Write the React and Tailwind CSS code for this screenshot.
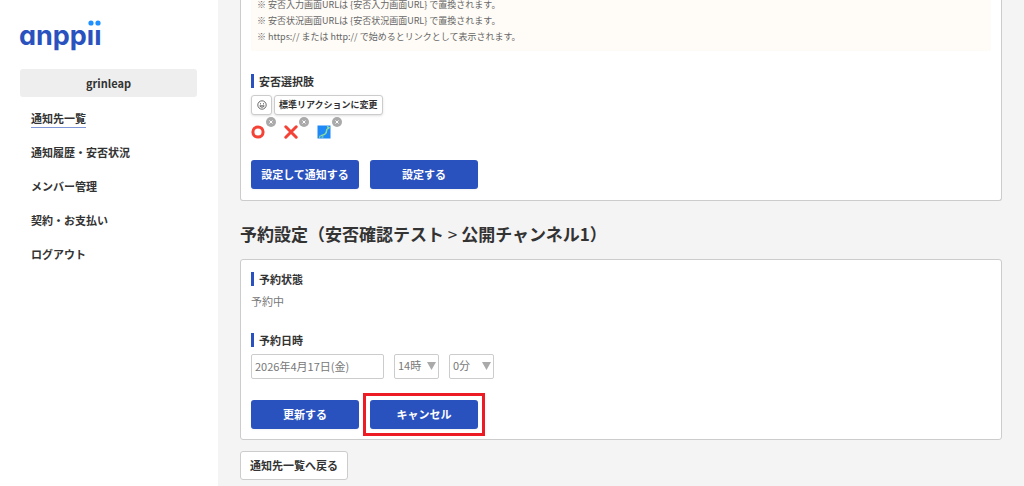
import React from "react";

const navItems = [
  { label: "通知先一覧", active: true },
  { label: "通知履歴・安否状況" },
  { label: "メンバー管理" },
  { label: "契約・お支払い" },
  { label: "ログアウト" },
];

const notes = [
  "※ 安否入力画面URLは {安否入力画面URL} で置換されます。",
  "※ 安否状況画面URLは {安否状況画面URL} で置換されます。",
  "※ https:// または http:// で始めるとリンクとして表示されます。",
];

function Logo() {
  return (
    <svg viewBox="0 0 80 36" className="block h-9 w-20 overflow-visible" role="img" aria-label="anppii">
      <clipPath id="logo-body">
        <rect x="-4" y="11" width="90" height="30" />
      </clipPath>
      <text
        x="-1"
        y="27"
        fill="#2a52be"
        clipPath="url(#logo-body)"
        className="font-['Inter',sans-serif] text-[27px] font-bold [font-feature-settings:'cv11']"
      >
        anppii
      </text>
      <circle cx="71" cy="5" r="2.6" fill="#1e90ff" />
      <circle cx="78" cy="5" r="2.6" fill="#1e90ff" />
    </svg>
  );
}

function SmileIcon() {
  return (
    <svg viewBox="0 0 10 10" className="size-[10px]" fill="none" stroke="#444" strokeWidth="0.8" aria-hidden="true">
      <circle cx="5" cy="5" r="4.2" />
      <path d="M2.8 5.8a2.3 2 0 0 0 4.4 0z" />
      <path d="M3.5 3.2v1.2M6.5 3.2v1.2" />
    </svg>
  );
}

function CircleMark() {
  return (
    <svg viewBox="0 0 14 14" className="size-[14px]" fill="none" aria-hidden="true">
      <circle cx="7" cy="7" r="5.1" stroke="#f44336" strokeWidth="3" />
    </svg>
  );
}

function CrossMark() {
  return (
    <svg viewBox="0 0 14 14" className="size-[14px]" fill="none" aria-hidden="true">
      <path d="M1.8 1.8l10.4 10.4M12.2 1.8L1.8 12.2" stroke="#f44336" strokeWidth="3" strokeLinecap="round" />
    </svg>
  );
}

function MapMark() {
  return (
    <svg viewBox="0 0 14 14" className="size-[14px]" fill="none" stroke="#8fdc96" strokeLinecap="round" aria-hidden="true">
      <rect x="0.5" y="0.5" width="13" height="13" fill="#1e88f7" stroke="none" />
      <path d="M10.6 1.8l1.4 1-1.4 1" strokeWidth="1.5" />
      <path d="M9.8 4.6l-.6 3-1.6 1.8-3.4 1.2" strokeWidth="1.5" />
      <path d="M3 11l-.3 1.4M5 12.2l1-.3" strokeWidth="1.2" />
    </svg>
  );
}

function Reaction({ label, children }) {
  return (
    <li className="relative w-[33px] pt-1">
      {children}
      <button
        type="button"
        aria-label={`${label}を削除`}
        className="absolute -top-1 left-[15px] flex size-[10px] items-center justify-center rounded-full bg-[#aaa]"
      >
        <svg viewBox="0 0 10 10" className="size-[10px]" stroke="#fff" strokeWidth="1" aria-hidden="true">
          <path d="M3.5 3.5l3 3M6.5 3.5l-3 3" />
        </svg>
      </button>
    </li>
  );
}

function SectionTitle({ children, ...rest }) {
  return (
    <h3 className="flex items-center gap-[5px] text-[11px] leading-[14px] font-bold text-[#333]" {...rest}>
      <span className="h-[14px] w-[3px] bg-[#2a52be]" />
      {children}
    </h3>
  );
}

function PrimaryButton({ children }) {
  return (
    <button
      type="button"
      className="block h-[29px] w-[108px] rounded-[3px] bg-[#2a52be] text-[11px] font-bold text-white shadow-xs"
    >
      {children}
    </button>
  );
}

function TimeSelect({ label, value }) {
  return (
    <div className="relative">
      <select
        aria-label={label}
        defaultValue={value}
        className="block h-[25px] w-[45px] appearance-none rounded-[2px] border border-[#ccc] bg-white pb-[2px] pl-[3px] text-[11px] text-[#777]"
      >
        <option>{value}</option>
      </select>
      <svg viewBox="0 0 9 8" className="pointer-events-none absolute top-2 right-[3px] h-2 w-[9px]" aria-hidden="true">
        <path d="M0 0h9L4.5 8z" fill="#aaa" />
      </svg>
    </div>
  );
}

export default function App() {
  return (
    <div className="flex min-h-screen bg-[#f4f4f4] font-['Noto_Sans_CJK_JP',sans-serif] text-[#333]">
      <aside className="w-[218px] shrink-0 bg-white px-5 pt-[18px]">
        <a href="#home" className="block">
          <Logo />
        </a>
        <div className="mt-[15px] mr-[1px] h-7 rounded-[3px] bg-[#eee] text-center text-[11px] leading-7 font-bold">
          grinleap
        </div>
        <nav className="mt-[13px] ml-[11px]">
          <ul className="flex flex-col gap-[14px]">
            {navItems.map((item) => (
              <li key={item.label} className="h-5 text-[11px] leading-[17px] font-bold">
                <a
                  href="#menu"
                  aria-current={item.active ? "page" : undefined}
                  className={item.active ? "inline-block border-b border-[#7f97d8]" : "inline-block"}
                >
                  {item.label}
                </a>
              </li>
            ))}
          </ul>
        </nav>
      </aside>

      <main className="min-w-0 flex-1 pr-[22px] pb-[6px] pl-[22px]">
        <section className="rounded-b-[3px] border border-t-0 border-[#ccc] bg-white px-[10px] pb-[11px]">
          <div className="bg-[#fffcf7] px-[6px] pb-[6px] text-[9px] text-[#666]">
            {notes.map((note, i) => (
              <p key={note} className={i === 0 ? "h-[13px] leading-[10px]" : "leading-4"}>
                {note}
              </p>
            ))}
          </div>
          <div className="pt-[23px]">
            <SectionTitle>安否選択肢</SectionTitle>
            <div className="mt-[7px] flex gap-[2px]">
              <button
                type="button"
                aria-label="絵文字を選択"
                className="flex h-5 w-[21px] items-center justify-center rounded-[3px] border border-[#ccc] bg-white shadow-sm"
              >
                <SmileIcon />
              </button>
              <button
                type="button"
                className="h-5 rounded-[3px] border border-[#ccc] bg-white px-[4px] text-[9px] leading-[18px] font-bold shadow-sm"
              >
                標準リアクションに変更
              </button>
            </div>
            <ul className="mt-[6px] flex">
              <Reaction label="丸"><CircleMark /></Reaction>
              <Reaction label="バツ"><CrossMark /></Reaction>
              <Reaction label="地図"><MapMark /></Reaction>
            </ul>
            <div className="mt-[21px] flex gap-[11px]">
              <PrimaryButton>設定して通知する</PrimaryButton>
              <PrimaryButton>設定する</PrimaryButton>
            </div>
          </div>
        </section>

        <h2 className="mt-5 text-[17px] leading-[26px] font-bold">
          予約設定（安否確認テスト <span className="font-normal">&gt;</span> 公開チャンネル1）
        </h2>

        <section className="mt-3 rounded-[3px] border border-[#ccc] bg-white px-[10px] pt-3 pb-[10px]">
          <SectionTitle>予約状態</SectionTitle>
          <p className="mt-[7px] text-[11px] leading-4 text-[#777]">予約中</p>
          <div className="mt-6">
            <SectionTitle id="schedule-label">予約日時</SectionTitle>
          </div>
          <div className="mt-[7px] flex gap-[10px]">
            <input
              type="text"
              aria-labelledby="schedule-label"
              defaultValue="2026年4月17日(金)"
              className="h-[25px] w-[133px] rounded-[2px] border border-[#ccc] bg-white px-[3px] pb-[2px] text-[11px] text-[#777]"
            />
            <TimeSelect label="時" value="14時" />
            <TimeSelect label="分" value="0分" />
          </div>
          <div className="mt-[21px] flex gap-[11px]">
            <PrimaryButton>更新する</PrimaryButton>
            <div className="relative">
              <PrimaryButton>キャンセル</PrimaryButton>
              <span className="pointer-events-none absolute -inset-[7px] border-[3px] border-[#ed1c24]" />
            </div>
          </div>
        </section>

        <a
          href="#list"
          className="mt-[11px] inline-block h-[29px] w-[108px] rounded-[3px] border border-[#ccc] bg-white text-center text-[11px] leading-[27px] font-bold"
        >
          通知先一覧へ戻る
        </a>
      </main>
    </div>
  );
}
